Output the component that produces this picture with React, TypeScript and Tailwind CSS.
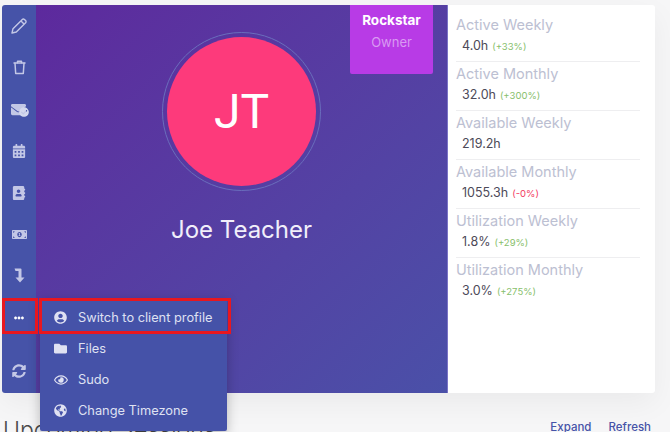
import React from "react";
import { FaCalendarAlt, FaAddressBook, FaMoneyBillAlt, FaEllipsisH, FaSyncAlt, FaUserCircle, FaFolder, FaRegEye, FaGlobeAmericas, FaEnvelope, FaCheckCircle } from "react-icons/fa";

const font = { fontFamily: "Inter, 'Open Sans', sans-serif" };

function Pencil() {
  return (
    <svg width="16" height="16" viewBox="0 0 16 16" fill="none" stroke="currentColor" strokeWidth="1.4" strokeLinejoin="round">
      <path d="M1 15l1-4.3L11.3 1.4c.6-.6 1.5-.6 2.1 0l1.2 1.2c.6.6.6 1.5 0 2.1L5.300 14 1 15z" />
      <path d="M10 3l3 3" />
    </svg>
  );
}

function Trash() {
  return (
    <svg width="13" height="15" viewBox="0 0 13 15" fill="none" stroke="currentColor" strokeWidth="1.5" strokeLinejoin="round" strokeLinecap="round">
      <path d="M1 3h11" />
      <path d="M4.500 2.800V1.300h4v1.500" />
      <path d="M2 3.200l.7 10.300h7.600l.7-10.300" />
    </svg>
  );
}

function LevelDown() {
  return (
    <svg width="11" height="15" viewBox="0 0 11 15" fill="currentColor">
      <path d="M0.500 0.500h6a1 1 0 0 1 1 1v8h3L6 14.500 1.500 9.500h3V3H1.500z" />
    </svg>
  );
}

function Mail() {
  return (
    <span className="relative block w-[17px] h-[13px]">
      <FaEnvelope size={15} className="absolute left-0 -top-px" />
      <FaCheckCircle size={10} className="absolute -right-[1px] -bottom-[1px] text-[#d5d8ee]" />
    </span>
  );
}

const side = [
  <Pencil />,
  <Trash />,
  <Mail />,
  <FaCalendarAlt size={14} />,
  <FaAddressBook size={14} />,
  <FaMoneyBillAlt size={15} />,
  <LevelDown />,
];

const stats = [
  ["Active Weekly", "4.0h", "(+33%)", "g"],
  ["Active Monthly", "32.0h", "(+300%)", "g"],
  ["Available Weekly", "219.2h", "", "g"],
  ["Available Monthly", "1055.3h", "(-0%)", "r"],
  ["Utilization Weekly", "1.8%", "(+29%)", "g"],
  ["Utilization Monthly", "3.0%", "(+275%)", "g"],
];

const menu = [
  [<FaUserCircle size={13} />, "Switch to client profile"],
  [<FaFolder size={13} />, "Files"],
  [<FaRegEye size={14} />, "Sudo"],
  [<FaGlobeAmericas size={13} />, "Change Timezone"],
] as const;

export default function App() {
  return (
    <div className="relative w-[670px] h-[432px] overflow-hidden bg-[#f6f6f7]" style={font}>
      <div className="pt-[5px] pl-[2px]">
        <div className="flex w-[653px] h-[388px] rounded-[3px] overflow-hidden bg-white shadow-[0_10px_30px_rgba(0,0,0,0.05)]">
          <div className="w-[34px] shrink-0 bg-[#4653a8] flex flex-col text-[#c3c7e6]">
            {side.map((icon, i) => (
              <div key={i} className="h-[41.700px] flex items-center justify-center">{icon}</div>
            ))}
            <div className="h-[41.700px] flex items-center justify-center text-white"><FaEllipsisH size={10} /></div>
            <div className="h-[41.700px] mt-[12px] flex items-center justify-center"><FaSyncAlt size={14} /></div>
          </div>
          <div className="relative w-[412px] shrink-0 border-r border-[#7b74c6] bg-gradient-to-br from-[#5d299d] to-[#4a50a8] flex flex-col items-center">
            <div className="absolute left-[314px] top-0 w-[83px] h-[69px] rounded-b-[2px] bg-[#b83be6] flex flex-col items-center">
              <span className="mt-[6px] text-[13.500px] leading-[18px] font-bold text-white">Rockstar</span>
              <span className="mt-[4px] text-[13px] leading-[18px] text-[#d99af2]">Owner</span>
            </div>
            <div className="mt-[27px] w-[159px] h-[159px] rounded-full border-[1.500px] border-[#6a6ebc] flex items-center justify-center">
              <div className="w-[149px] h-[149px] rounded-full bg-[#fd3a7b] flex items-center justify-center">
                <span className="text-[48px] leading-none text-white" style={{ fontFamily: "Roboto, sans-serif", fontWeight: 400 }}>JT</span>
              </div>
            </div>
            <div className="mt-[23px] text-[24px] leading-[32px] text-[#f1effa]">Joe Teacher</div>
          </div>
          <div className="flex-1 pl-[8px] pr-[15px] pt-[8px]">
            {stats.map(([label, value, delta, tone], i) => (
              <div key={label} className={"h-[49px] pt-[2px] " + (i < 5 ? "border-b border-[#eeeef0]" : "")}>
                <div className="text-[14.500px] leading-[20px] text-[#bcc0d2]">{label}</div>
                <div className="mt-[1px] pl-[6px] flex items-baseline gap-[4px] leading-[20px]">
                  <span className="text-[12.500px] text-[#4d4a58]">{value}</span>
                  {delta && (
                    <span className={"text-[9.500px] " + (tone === "g" ? "text-[#88c06c]" : "text-[#f3395f]")}>{delta}</span>
                  )}
                </div>
              </div>
            ))}
          </div>
        </div>
      </div>

      <div className="flex items-start justify-between pl-[3px] pr-[19px] pt-[21px]">
        <div className="text-[23px] leading-[32px] font-light text-[#4a4a4a]">Upcoming Sessions</div>
        <div className="flex gap-[17px] pt-[5px] text-[11.500px] leading-[16px] font-medium text-[#4653a8]">
          <span>Expand</span>
          <span>Refresh</span>
        </div>
      </div>

      <div className="absolute left-[40px] top-[298px] w-[187px] h-[133px] pt-[4px] rounded-b-[2px] bg-[#4552a8] shadow-[0_4px_12px_rgba(0,0,0,0.25)] text-[#dfe1f2]">
        {menu.map(([icon, label]) => (
          <div key={label} className="flex items-center pl-[14px] h-[31px]">
            <span className="w-[24px] flex justify-start">{icon}</span>
            <span className="text-[12.800px] leading-[18px]">{label}</span>
          </div>
        ))}
      </div>
      <div className="absolute left-[2px] top-[298px] w-[36px] h-[36px] border-[3px] border-[#e8171f]" />
      <div className="absolute left-[39px] top-[298px] w-[192px] h-[36px] border-[3px] border-[#e8171f]" />
    </div>
  );
}
